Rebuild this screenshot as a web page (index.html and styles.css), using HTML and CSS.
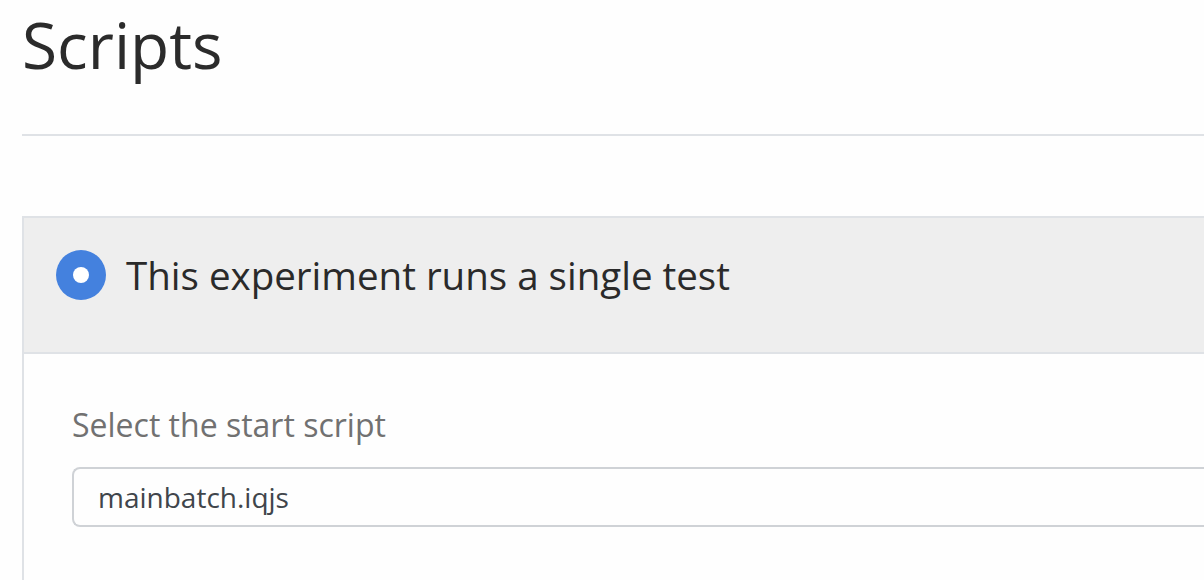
FILE: index.html
```html
<!DOCTYPE html>
<html lang="en">
<head>
<meta charset="utf-8">
<title>Scripts</title>
<link rel="stylesheet" href="styles.css">
</head>
<body>
<div class="page">
  <h1 class="title">Scripts</h1>
  <hr class="divider">
  <section class="panel">
    <label class="panel-header">
      <span class="radio"><span class="radio-dot"></span></span>
      <span class="panel-title">This experiment runs a single test</span>
    </label>
    <div class="panel-body">
      <div class="field-label">Select the start script</div>
      <div class="select">mainbatch.iqjs</div>
    </div>
  </section>
</div>
</body>
</html>
```

FILE: styles.css
```css
html, body {
  margin: 0;
  padding: 0;
  background: #fefefe;
  overflow: hidden;
}
body {
  font-family: "Open Sans", "Noto Sans", "DejaVu Sans", sans-serif;
  color: #2b2b2b;
  height: 580px;
}
.page {
  padding-left: 22px;
}
.title {
  margin: 7px 0 0 0;
  font-size: 64px;
  font-weight: 400;
  line-height: 1.2;
  color: #2b2b2b;
}
.divider {
  margin: 50px 0 0 0;
  border: 0;
  height: 2px;
  background: #dfe2e6;
}
.panel {
  margin-top: 80px;
  border: 2px solid #dfe2e6;
  border-right: 0;
}
.panel-header {
  display: flex;
  align-items: center;
  gap: 20px;
  box-sizing: border-box;
  height: 136px;
  padding: 0 0 20px 32px;
  background: #eeeeee;
  border-bottom: 2px solid #dfe2e6;
}
.radio {
  width: 50px;
  height: 50px;
  border-radius: 50%;
  background: #4481de;
  display: flex;
  align-items: center;
  justify-content: center;
  flex: none;
}
.radio-dot {
  width: 16px;
  height: 16px;
  border-radius: 50%;
  background: #ffffff;
}
.panel-title {
  font-size: 38.5px;
  color: #2a2a2a;
  line-height: 1.2;
}
.panel-body {
  padding: 47px 0 60px 48px;
  background: #fefefe;
}
.field-label {
  font-size: 32px;
  line-height: 1.5;
  color: #717171;
}
.select {
  margin-top: 18px;
  height: 60px;
  box-sizing: border-box;
  border: 2px solid #cfd2d6;
  border-right: 0;
  border-radius: 8px 0 0 8px;
  padding-left: 24px;
  display: flex;
  align-items: center;
  font-size: 28px;
  color: #40454b;
}
```
